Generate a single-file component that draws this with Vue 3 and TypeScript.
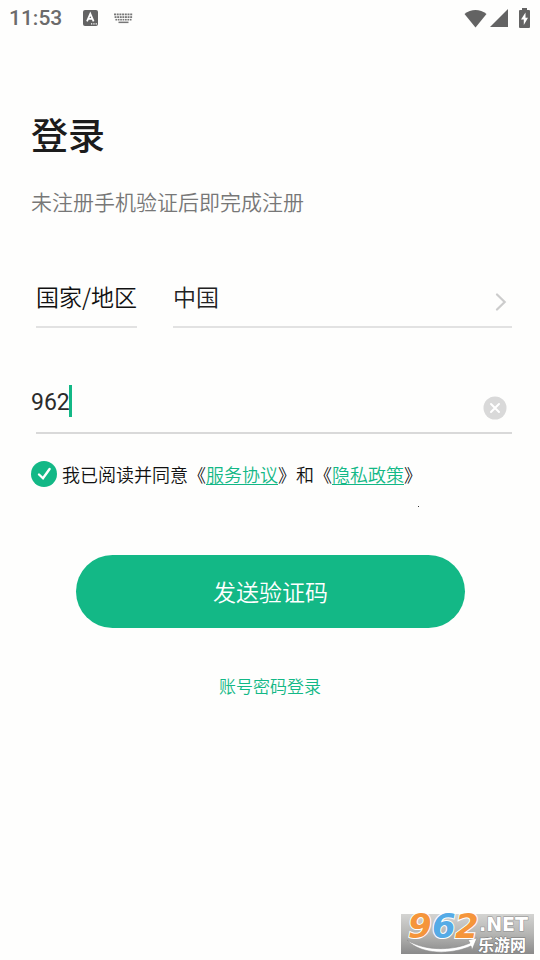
<script setup lang="ts">
import { ref } from 'vue'

const phone = ref<string>('962')
const country = ref<string>('中国')
const agreed = ref<boolean>(true)

const keyColumns: number[] = [0, 1, 2, 3, 4, 5, 6]
</script>

<template>
  <div class="screen">
    <header class="status">
      <div class="status-side">
        <span class="clock">11:53</span>
        <svg class="ime" width="15" height="16" viewBox="0 0 15 16" aria-hidden="true">
          <rect width="15" height="16" rx="2" fill="#636363" />
          <path d="M4 11.3 7.3 3.8 10.6 11.3M5.2 8.8h4.2" fill="none" stroke="#fff" stroke-width="1.8" />
          <path d="M8 13.8h1.3M10.3 13.8h1.3M12.6 13.8h1.3" stroke="#fff" stroke-width="1.2" />
        </svg>
        <svg class="keyboard" width="19" height="11" viewBox="0 0 19 11" fill="#777" aria-hidden="true">
          <rect v-for="k in keyColumns" :key="'a' + k" :x="k * 2.7" y="0.5" width="2" height="1.8" />
          <rect v-for="k in keyColumns" :key="'b' + k" :x="k * 2.6 + 0.6" y="3.2" width="1.9" height="1.8" />
          <rect v-for="k in keyColumns" :key="'c' + k" :x="k * 2.4 + 1.4" y="5.9" width="1.7" height="1.6" />
          <rect x="4.5" y="8.6" width="10" height="1.5" />
        </svg>
      </div>
      <div class="status-side right">
        <svg width="23" height="19" viewBox="0 0 23 19" aria-hidden="true">
          <path d="M.5 5C7-.4 16-.4 22.500 5L11.500 18.500Z" fill="#636363" />
        </svg>
        <svg width="18" height="18" viewBox="0 0 18 18" aria-hidden="true">
          <path d="M0 18 18 0V18Z" fill="#636363" />
        </svg>
        <svg class="battery" width="11" height="20" viewBox="0 0 11 20" aria-hidden="true">
          <path d="M3 0h5v2h2a1 1 0 0 1 1 1v16a1 1 0 0 1-1 1H1a1 1 0 0 1-1-1V3a1 1 0 0 1 1-1h2Z" fill="#636363" />
          <path d="M6.500 4.500 2 11.500h2.800V17L9 9.800H6.500Z" fill="#fff" />
        </svg>
      </div>
    </header>

    <main class="content">
      <h1>登录</h1>
      <p class="subtitle">未注册手机验证后即完成注册</p>

      <form @submit.prevent>
        <div class="country-row">
          <label class="country-label" for="country">国家/地区</label>
          <div class="country-field">
            <select id="country" v-model="country">
              <option value="中国">中国</option>
            </select>
            <svg class="chevron" width="12" height="18" viewBox="0 0 12 18" aria-hidden="true">
              <path d="M2 1.500 9.700 9 2 16.500" fill="none" stroke="#ccc" stroke-width="2.200" stroke-linecap="round" />
            </svg>
          </div>
        </div>

        <div class="phone-row">
          <div class="phone-box">
            <input v-model="phone" type="tel" aria-label="手机号" />
            <div class="caret-layer" aria-hidden="true">
              <span class="typed">{{ phone }}</span><span class="caret"></span>
            </div>
          </div>
          <button class="clear" type="button" aria-label="清除" @click="phone = ''">
            <svg width="24" height="24" viewBox="0 0 24 24" aria-hidden="true">
              <circle cx="12" cy="12" r="11.500" fill="#d9d9d9" />
              <path d="M8 8l8 8M16 8l-8 8" stroke="#fff" stroke-width="2" stroke-linecap="round" />
            </svg>
          </button>
        </div>

        <div class="agreement">
          <label class="tick">
            <input v-model="agreed" type="checkbox" aria-label="我已阅读并同意" />
            <svg width="26" height="26" viewBox="0 0 26 26" aria-hidden="true">
              <circle cx="13" cy="13" r="13" :fill="agreed ? '#13b886' : '#d9d9d9'" />
              <path d="M8 13.500 12 17.300 18.600 8" fill="none" stroke="#fff" stroke-width="2.400" stroke-linecap="round" />
            </svg>
          </label>
          <span>我已阅读并同意《<a href="#terms">服务协议</a>》和《<a href="#privacy">隐私政策</a>》</span>
        </div>
        <div class="speck"></div>

        <button class="submit" type="submit">发送验证码</button>
      </form>

      <a class="password-login" href="#password">账号密码登录</a>
    </main>

    <footer class="watermark">
      <svg viewBox="0 0 134 60" width="134" height="60" role="img" aria-label="962.NET 乐游网">
        <defs>
          <linearGradient id="plate" x1="0" y1="0" x2="0" y2="1">
            <stop offset="0" stop-color="#d4d4d2" />
            <stop offset="0.500" stop-color="#b5b5b3" />
            <stop offset="1" stop-color="#8a8a8a" />
          </linearGradient>
        </defs>
        <rect y="19" width="133" height="40" fill="url(#plate)" />
        <path d="M6 45C23 56 51 56 69 48L67 45L76 43L71 55L70 51C50 60 20 60 6 45Z" fill="#fff" stroke="#8a8a8a" stroke-width="0.600" />
        <g class="digits">
          <text x="7" y="43" fill="#f5953a">9</text>
          <text x="31" y="43" fill="#55abe6">6</text>
          <text x="54" y="43" fill="#f5953a">2</text>
        </g>
        <text class="net" x="78" y="36">.NET</text>
        <text class="site" x="77" y="56">乐游网</text>
      </svg>
    </footer>
  </div>
</template>

<style>
body {
  margin: 0;
  background: #fefefd;
}
</style>

<style scoped>
.screen {
  box-sizing: border-box;
  min-height: 100vh;
  display: flex;
  flex-direction: column;
  background: #fefefd;
  color: #111;
  font-family: "Noto Sans CJK SC", sans-serif;
  font-weight: 350;
}

svg {
  display: block;
}

.status {
  display: flex;
  justify-content: space-between;
  align-items: center;
  height: 36px;
  padding: 0 10px 0 9px;
}

.status-side {
  display: flex;
  align-items: center;
}

.right {
  gap: 3px;
}

.battery {
  margin-left: 8px;
}

.clock {
  font: 500 21px/36px Roboto, sans-serif;
  color: #6b6b6b;
}

.ime {
  margin-left: 21px;
}

.keyboard {
  margin-left: 16px;
}

.content {
  display: flex;
  flex-direction: column;
  padding: 71px 28px 0 31px;
}

h1 {
  margin: 0;
  font-size: 37px;
  line-height: 54px;
  font-weight: 500;
  color: #1c1c1c;
}

.subtitle {
  margin: 24px 0 0;
  font-size: 21px;
  line-height: 32px;
  color: #777;
}

.country-row {
  display: flex;
  gap: 36px;
  margin: 61px 0 0 5px;
}

.country-label,
.country-field {
  height: 48px;
  border-bottom: 2px solid #e2e2e2;
  font-size: 23px;
  line-height: 36px;
}

.country-field {
  flex: 1;
  display: flex;
  align-items: flex-start;
}

select {
  flex: 1;
  height: 36px;
  padding: 0;
  border: 0;
  appearance: none;
  background: none;
  color: #222;
  font: inherit;
  outline: none;
}

.chevron {
  margin: 15px 5px 0 0;
}

.phone-row {
  display: flex;
  align-items: center;
  justify-content: space-between;
  height: 106px;
  position: relative;
}

.phone-row::after {
  content: "";
  position: absolute;
  left: 5px;
  right: 0;
  bottom: 0;
  height: 2px;
  background: #d9d9d9;
}

.phone-box {
  position: relative;
  flex: 1;
  height: 36px;
  margin-top: 44px;
}

.phone-box input,
.caret-layer {
  box-sizing: border-box;
  width: 100%;
  height: 36px;
  padding: 0;
  border: 0;
  background: none;
  font: 400 23px/36px Roboto, sans-serif;
  color: #2b2b2b;
  outline: none;
}

.phone-box input {
  display: block;
  caret-color: transparent;
}

.caret-layer {
  position: absolute;
  left: 0;
  top: 0;
  display: flex;
  pointer-events: none;
}

.typed {
  visibility: hidden;
}

.caret {
  width: 3px;
  height: 32px;
  margin-left: -1px;
  background: #13b886;
}

.clear {
  margin: 54px 5px 0 0;
  padding: 0;
  border: 0;
  background: none;
}

.agreement {
  display: flex;
  align-items: center;
  gap: 5px;
  margin-top: 26px;
  font-size: 18px;
  line-height: 28px;
  white-space: nowrap;
}

.tick {
  position: relative;
}

.tick input {
  position: absolute;
  inset: 0;
  margin: 0;
  opacity: 0;
}

a {
  color: #13b886;
}

.agreement a {
  text-decoration-thickness: 1px;
  text-underline-offset: 2px;
}

.speck {
  width: 1px;
  height: 1px;
  margin: 18px 0 0 387px;
  background: #333;
}

.submit {
  display: block;
  width: calc(100% - 92px);
  height: 73px;
  margin: 48px 0 0 45px;
  padding: 0 0 2px;
  border: 0;
  border-radius: 37px;
  background: #13b886;
  color: #fff;
  font: 350 23px/36px "Noto Sans CJK SC", sans-serif;
}

.password-login {
  align-self: center;
  margin: 45px 3px 0 0;
  font-size: 17px;
  line-height: 26px;
  text-decoration: none;
}

.watermark {
  display: flex;
  justify-content: flex-end;
  margin-top: auto;
  padding: 0 5px 5px 0;
}

.digits {
  font: italic 700 34px "DejaVu Sans", sans-serif;
  stroke: #fff;
  stroke-width: 2px;
  paint-order: stroke;
}

.net {
  font: 700 19px "DejaVu Sans", sans-serif;
  fill: #fff;
  stroke: #8a8a8a;
  stroke-width: 1px;
  paint-order: stroke;
}

.site {
  font: 700 16px "Noto Sans CJK SC", sans-serif;
  fill: #fff;
  stroke: #777;
  stroke-width: 1px;
  paint-order: stroke;
}
</style>
